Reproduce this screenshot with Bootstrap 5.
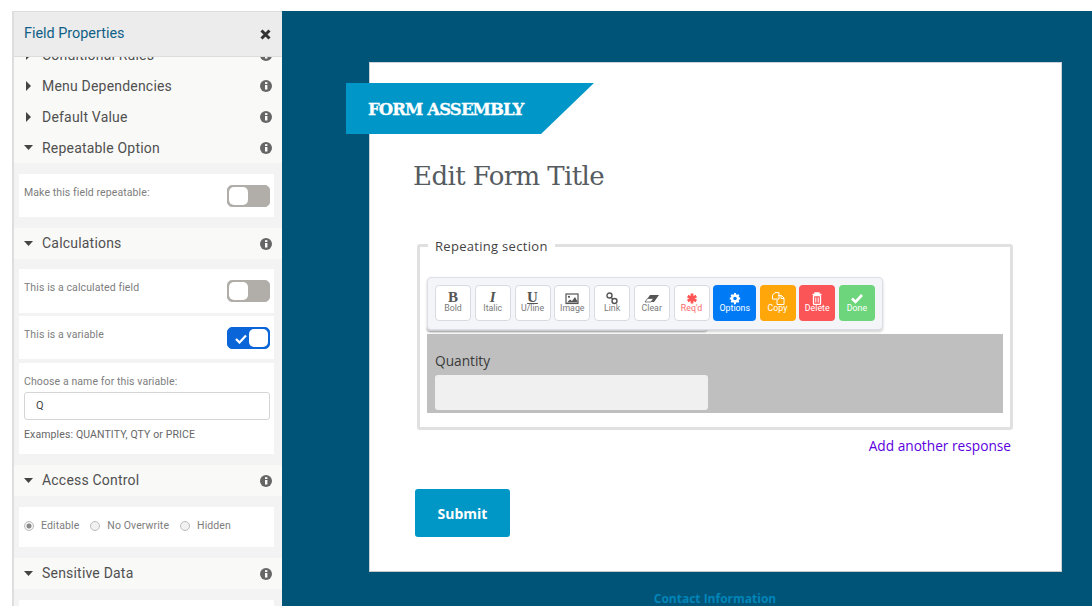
<!doctype html>
<html lang="en">
<head>
<meta charset="utf-8">
<title>Form</title>
<link href="https://cdn.jsdelivr.net/npm/bootstrap@5.3.0/dist/css/bootstrap.min.css" rel="stylesheet">
<style>
html,body{height:606px;overflow:hidden;background:#fff;}
body{font-family:Roboto,"Liberation Sans",sans-serif;padding-top:11px;}
.stage{height:595px;}
.side{width:270px;margin-left:12px;flex:none;background:#f3f3f3;border-left:2px solid #dedede;overflow:hidden;}
.side-head{height:46px;background:#ececec;border-top:1px solid #dcdcdc;border-bottom:1px solid #dcdcdc;color:#0f5f86;font-size:14.4px;padding-left:10px;padding-right:11px;}
.side-body{height:549px;overflow:hidden;}
.sec{height:31px;padding:0 10px 0 10px;color:#505050;font-size:14px;letter-spacing:.2px;background:#f9f9f8;}
.sec-first{margin-top:-18px;}
.sec-name{margin-left:10px;flex:1;}
.sec-low{padding-top:2px;}
.caret-r{width:7px;height:10px;flex:none;margin-left:1px;}
.caret-d{width:9px;height:5px;flex:none;margin-right:-1px;}
.ibox{width:12px;height:12px;flex:none;}
.pane{background:#fff;margin:0 8px 0 5px;padding:11px 4px 0 5px;font-size:10.5px;color:#7d7d7d;letter-spacing:.1px;}
.p-rep{height:43px;margin-top:11px;}
.p-calc{height:44px;margin-top:10px;}
.p-var{height:43px;margin-top:3px;}
.p-name{height:91px;margin-top:4px;}
.p-acc{height:40px;margin-top:11px;padding-top:0;padding-bottom:2px;}
.p-last{height:30px;margin-top:11px;}
.sec-wide{margin-top:11px;}
.tog{width:43px;height:22px;border-radius:5px;background:#b1aeaa;border:1px solid #b1aeaa;flex:none;padding:1px;}
.tog-knob{display:block;width:19px;height:18px;border-radius:5px;background:#fff;}
.tog-on{background:#0a66d8;border-color:#0a66d8;justify-content:flex-end;}
.tog-on svg{position:absolute;left:7px;top:6px;width:12px;height:10px;}
.varname{height:28px;border:1px solid #d5d5d5;border-radius:3px;font-size:11px;color:#444;padding:0 11px;margin:2px 0 7px;background:#fff;}
.hint{color:#666;font-size:10.5px;letter-spacing:.12px;}
.rd{width:10px;height:10px;border-radius:50%;border:1px solid #bdbdbd;background:#f1f1f1;margin-right:7px;flex:none;}
.rd-on{background:radial-gradient(circle,#8a8a8a 0 2.2px,#f1f1f1 2.8px);}
.rd-item{margin-right:11px;}
.workspace{flex:1;background:#005478;overflow:hidden;padding-top:51px;}
.sheet{width:693px;height:510px;margin-left:87px;background:#fff;border:1px solid #c9d2d6;border-bottom-color:#c7c7c7;padding:0;}
.ribbon{left:-24px;top:20px;width:248px;height:51px;background:#0096c7;clip-path:polygon(0 0,100% 0,195px 100%,0 100%);color:#fff;font-family:"DejaVu Serif","Liberation Serif",serif;font-weight:700;font-size:16.5px;padding-left:22px;padding-top:3px;letter-spacing:-.9px;-webkit-text-stroke:.3px #fff;}
.title-txt{font-family:"DejaVu Serif","Liberation Serif",serif;font-weight:300;font-size:26px;color:#555b60;margin:0;position:absolute;left:43px;top:95px;letter-spacing:-.6px;line-height:36px;}
.flow{padding:181px 48px 0 47px;}
.rep{height:186px;border:3px solid #e0e0e0;border-radius:3px;margin-right:0;padding:0;}
.rep-legend{left:8px;top:-10px;background:#fff;padding:0 7px;font-family:"Open Sans","Liberation Sans",sans-serif;font-size:13px;color:#444;letter-spacing:.3px;line-height:18px;}
.grey{margin:87px 7px 0 7px;height:79px;background:#bfbfbf;padding:17px 8px 0;font-family:"Open Sans","Liberation Sans",sans-serif;font-size:13.7px;color:#3a3a3a;}
.grey-lab{line-height:19px;}
.grey-in{display:block;width:273px;height:35px;background:#f0f0f0;border-radius:3px;margin-top:5px;}
.under{left:7px;top:80px;width:280px;height:4px;background:#f2f3f7;box-shadow:0 1px 2px rgba(0,0,0,.3);border-radius:0 0 3px 3px;}
.bar{left:7px;top:30px;width:456px;height:53px;background:#f4f5f9;border:1px solid #dcdee6;border-radius:4px;box-shadow:0 2px 3px rgba(0,0,0,.18);padding:7px 7px 0;gap:3.75px;}
.tb{width:36px;height:36px;border:1px solid #d9dbe3;border-radius:4px;background:#fff;color:#7a7a7a;font-size:8.8px;line-height:9px;padding:0 0 2px;flex:none;}
.tb svg{display:block;height:13px;width:16px;margin-bottom:-1px;}
.tb-let{font-family:"Liberation Serif",serif;font-weight:700;font-size:15px;line-height:11px;height:11px;margin-bottom:1px;color:#555;}
.tb-u{text-decoration:underline;text-underline-offset:1px;text-decoration-thickness:1px;}
.tb-c{border:0;color:#fff;}
.tb-opt{background:#007bf5;width:43px;}
.tb-copy{background:#ffa60a;margin-left:-.5px;}
.tb-del{background:#fb5558;}
.tb-done{background:#6dd57b;}
.tb-req{color:#f86a6a;}
.add-link{color:#5a00e0;font-family:"Open Sans","Liberation Sans",sans-serif;font-size:13.7px;text-align:right;margin:6px 2px 0 0;line-height:19px;text-decoration:none;display:block;}
.sub-btn{width:95px;height:48px;background:#0096c5;color:#fff;border:0;border-radius:3px;font-family:"Open Sans","Liberation Sans",sans-serif;font-weight:700;font-size:14px;margin-top:34px;margin-left:-2px;}
.foot-txt{color:#0085b8;font-family:"Open Sans","Liberation Sans",sans-serif;font-weight:700;font-size:12px;text-align:center;margin:20px 0 0 0;width:866px;line-height:14px;}
</style>
</head>
<body>
<div class="stage d-flex">
  <aside class="side d-flex flex-column">
    <div class="side-head d-flex align-items-center justify-content-between flex-none">
      <span>Field Properties</span>
      <svg width="11" height="11" viewBox="0 0 11 11"><path d="M1.5 1.5l8 8M9.5 1.5l-8 8" stroke="#333" stroke-width="3"/></svg>
    </div>
    <div class="side-body">
      <div class="sec sec-first d-flex align-items-center"><svg class="caret-r" viewBox="0 0 7 10"><path d="M1 0l5 5-5 5z" fill="#444"/></svg><span class="sec-name sec-low">Conditional Rules</span><svg class="ibox" viewBox="0 0 12 12"><circle cx="6" cy="6" r="6" fill="#666"/><rect x="5" y="5" width="2.4" height="4.5" fill="#fff"/><rect x="5" y="2.2" width="2.4" height="1.8" fill="#fff"/></svg></div>
      <div class="sec d-flex align-items-center"><svg class="caret-r" viewBox="0 0 7 10"><path d="M1 0l5 5-5 5z" fill="#444"/></svg><span class="sec-name sec-low">Menu Dependencies</span><svg class="ibox" viewBox="0 0 12 12"><circle cx="6" cy="6" r="6" fill="#666"/><rect x="5" y="5" width="2.4" height="4.5" fill="#fff"/><rect x="5" y="2.2" width="2.4" height="1.8" fill="#fff"/></svg></div>
      <div class="sec d-flex align-items-center"><svg class="caret-r" viewBox="0 0 7 10"><path d="M1 0l5 5-5 5z" fill="#444"/></svg><span class="sec-name sec-low">Default Value</span><svg class="ibox" viewBox="0 0 12 12"><circle cx="6" cy="6" r="6" fill="#666"/><rect x="5" y="5" width="2.4" height="4.5" fill="#fff"/><rect x="5" y="2.2" width="2.4" height="1.8" fill="#fff"/></svg></div>
      <div class="sec d-flex align-items-center"><svg class="caret-d" viewBox="0 0 9 5"><path d="M0 0h9L4.500 5z" fill="#444"/></svg><span class="sec-name sec-low">Repeatable Option</span><svg class="ibox" viewBox="0 0 12 12"><circle cx="6" cy="6" r="6" fill="#666"/><rect x="5" y="5" width="2.4" height="4.5" fill="#fff"/><rect x="5" y="2.2" width="2.4" height="1.8" fill="#fff"/></svg></div>

      <div class="pane p-rep d-flex justify-content-between align-items-start"><span>Make this field repeatable:</span><span class="tog d-flex"><span class="tog-knob"></span></span></div>

      <div class="sec sec-wide d-flex align-items-center"><svg class="caret-d" viewBox="0 0 9 5"><path d="M0 0h9L4.500 5z" fill="#444"/></svg><span class="sec-name">Calculations</span><svg class="ibox" viewBox="0 0 12 12"><circle cx="6" cy="6" r="6" fill="#666"/><rect x="5" y="5" width="2.4" height="4.5" fill="#fff"/><rect x="5" y="2.2" width="2.4" height="1.8" fill="#fff"/></svg></div>

      <div class="pane p-calc d-flex justify-content-between align-items-start"><span>This is a calculated field</span><span class="tog d-flex"><span class="tog-knob"></span></span></div>
      <div class="pane p-var d-flex justify-content-between align-items-start"><span>This is a variable</span><span class="tog tog-on d-flex position-relative"><svg viewBox="0 0 12 10"><path d="M1 5l3.500 3.500L11 1.500" fill="none" stroke="#fff" stroke-width="2.2"/></svg><span class="tog-knob"></span></span></div>
      <div class="pane p-name">
        <div>Choose a name for this variable:</div>
        <div class="varname d-flex align-items-center">Q</div>
        <div class="hint">Examples: QUANTITY, QTY or PRICE</div>
      </div>

      <div class="sec sec-wide d-flex align-items-center"><svg class="caret-d" viewBox="0 0 9 5"><path d="M0 0h9L4.500 5z" fill="#444"/></svg><span class="sec-name">Access Control</span><svg class="ibox" viewBox="0 0 12 12"><circle cx="6" cy="6" r="6" fill="#666"/><rect x="5" y="5" width="2.4" height="4.5" fill="#fff"/><rect x="5" y="2.2" width="2.4" height="1.8" fill="#fff"/></svg></div>
      <div class="pane p-acc d-flex align-items-center">
        <span class="d-flex align-items-center rd-item"><span class="rd rd-on"></span>Editable</span>
        <span class="d-flex align-items-center rd-item"><span class="rd"></span>No Overwrite</span>
        <span class="d-flex align-items-center rd-item"><span class="rd"></span>Hidden</span>
      </div>

      <div class="sec sec-wide d-flex align-items-center"><svg class="caret-d" viewBox="0 0 9 5"><path d="M0 0h9L4.500 5z" fill="#444"/></svg><span class="sec-name">Sensitive Data</span><svg class="ibox" viewBox="0 0 12 12"><circle cx="6" cy="6" r="6" fill="#666"/><rect x="5" y="5" width="2.4" height="4.5" fill="#fff"/><rect x="5" y="2.2" width="2.4" height="1.8" fill="#fff"/></svg></div>
      <div class="pane p-last"></div>
    </div>
  </aside>

  <main class="workspace">
    <div class="sheet position-relative">
      <div class="ribbon position-absolute d-flex align-items-center">FORM ASSEMBLY</div>
      <h1 class="title-txt">Edit Form Title</h1>
      <div class="flow">
        <div class="rep position-relative">
          <span class="rep-legend position-absolute">Repeating section</span>
          <div class="under position-absolute"></div>
          <div class="bar position-absolute d-flex">
            <button class="tb d-flex flex-column align-items-center justify-content-center"><span class="tb-let">B</span>Bold</button>
            <button class="tb d-flex flex-column align-items-center justify-content-center"><span class="tb-let fst-italic">I</span>Italic</button>
            <button class="tb d-flex flex-column align-items-center justify-content-center"><span class="tb-let tb-u">U</span>U/line</button>
            <button class="tb d-flex flex-column align-items-center justify-content-center"><svg viewBox="0 0 16 13"><rect x="2" y="2" width="12" height="9.500" fill="none" stroke="#555" stroke-width="1.200"/><path d="M3 10.500l3-3 2 1.500 3-4 3 5.500z" fill="#555"/><circle cx="5" cy="4.800" r="1.100" fill="#555"/></svg>Image</button>
            <button class="tb d-flex flex-column align-items-center justify-content-center"><svg viewBox="0 0 16 13"><circle cx="5.500" cy="3.500" r="2.500" fill="none" stroke="#555" stroke-width="1.400"/><circle cx="10.500" cy="9" r="2.500" fill="none" stroke="#555" stroke-width="1.400"/><path d="M7 5.500l2 1.500" stroke="#555" stroke-width="1.400"/></svg>Link</button>
            <button class="tb d-flex flex-column align-items-center justify-content-center"><svg viewBox="0 0 16 13"><path d="M6 3h9l-5 7H1z" fill="#555"/><path d="M1 10l2.500-3.500h6L7 10z" fill="#fff" stroke="#555" stroke-width=".7"/></svg>Clear</button>
            <button class="tb tb-req d-flex flex-column align-items-center justify-content-center"><svg viewBox="0 0 16 13"><g stroke="#f55" stroke-width="2.800"><path d="M8 1.500v10M3.700 4l8.600 5M12.300 4L3.700 9"/></g></svg>Req'd</button>
            <button class="tb tb-c tb-opt d-flex flex-column align-items-center justify-content-center"><svg viewBox="0 0 16 13"><circle cx="8" cy="6.500" r="3" fill="none" stroke="#fff" stroke-width="2.400"/><g stroke="#fff" stroke-width="2"><path d="M8 1v2M8 10v2M2.800 6.500h2M11.200 6.500h2M4.300 2.800l1.400 1.400M10.300 8.800l1.400 1.400M11.700 2.800l-1.400 1.400M5.700 8.800l-1.400 1.400"/></g></svg>Options</button>
            <button class="tb tb-c tb-copy d-flex flex-column align-items-center justify-content-center"><svg viewBox="0 0 16 13"><path d="M5 .6h4v6.500H2.500V3.200z" fill="none" stroke="#fff"/><path d="M8 3.500h3.500L14 6v6.500H7V8" fill="none" stroke="#fff"/><path d="M11 3.500V6.500h3" fill="none" stroke="#fff"/></svg>Copy</button>
            <button class="tb tb-c tb-del d-flex flex-column align-items-center justify-content-center"><svg viewBox="0 0 16 13"><path d="M3.500 2.500h9M6 2.500V1h4v1.500" fill="none" stroke="#fff" stroke-width="1.300"/><rect x="4.500" y="3.500" width="7" height="9" rx="1" fill="none" stroke="#fff" stroke-width="1.300"/><path d="M6.800 5.500v5M9.200 5.500v5" stroke="#fff"/></svg>Delete</button>
            <button class="tb tb-c tb-done d-flex flex-column align-items-center justify-content-center"><svg viewBox="0 0 16 13"><path d="M3 6.500l3.500 3.500L13 3" fill="none" stroke="#fff" stroke-width="2.600"/></svg>Done</button>
          </div>
          <div class="grey">
            <div class="grey-lab">Quantity</div>
            <span class="grey-in"></span>
          </div>
        </div>
        <a class="add-link" href="#">Add another response</a>
        <button class="sub-btn btn p-0">Submit</button>
      </div>
    </div>
    <p class="foot-txt">Contact Information</p>
  </main>
</div>
<script src="https://cdn.jsdelivr.net/npm/bootstrap@5.3.0/dist/js/bootstrap.bundle.min.js"></script>
</body>
</html>
